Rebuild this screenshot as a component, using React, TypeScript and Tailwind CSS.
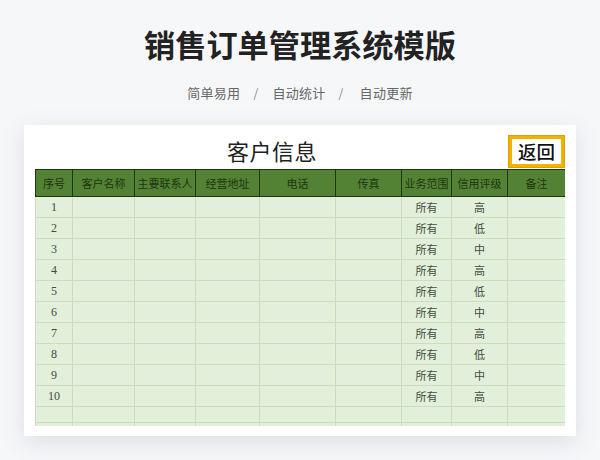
const columns = [
  { label: '序号', width: 'w-[37px]' },
  { label: '客户名称', width: 'w-[62px]' },
  { label: '主要联系人', width: 'w-[61px]' },
  { label: '经营地址', width: 'w-[64px]' },
  { label: '电话', width: 'w-[76px]' },
  { label: '传真', width: 'w-[66px]' },
  { label: '业务范围', width: 'w-[50px]' },
  { label: '信用评级', width: 'w-[56px]' },
  { label: '备注', width: 'w-[58px]' },
];

const grades = ['高', '低', '中', '高', '低', '中', '高', '低', '中', '高'];
const rows = grades.map((grade, i) => ({ no: String(i + 1), scope: '所有', grade }));

const cell = 'border border-[#cbdcc1] p-0 text-center align-middle';

function Row({ no = '', scope = '', grade = '', height = 'h-[21px]' }) {
  return (
    <tr className={height}>
      <td className={`${cell} font-["Liberation_Serif",serif] text-[12px]`}>{no}</td>
      <td className={cell} />
      <td className={cell} />
      <td className={cell} />
      <td className={cell} />
      <td className={cell} />
      <td className={cell}>{scope}</td>
      <td className={cell}>{grade}</td>
      <td className={cell} />
    </tr>
  );
}

export default function App() {
  return (
    <div className='flex h-[460px] w-[600px] flex-col items-center overflow-hidden bg-[#f6f7f9] font-["Noto_Sans_CJK_SC","Noto_Sans",sans-serif]'>
      <h1 className="mt-[23px] h-[42px] text-[31.2px] leading-[42px] font-bold text-[#222222]">销售订单管理系统模版</h1>

      <div className="mt-[19px] flex h-[18px] items-center text-[13px] leading-[18px] tracking-[0.3px] text-[#666666]">
        <span>简单易用</span>
        <span className="mx-[13px] text-[12px] text-[#888888]">/</span>
        <span className="ml-[1px]">自动统计</span>
        <span className="mx-[13px] text-[12px] text-[#888888]">/</span>
        <span className="ml-[3px]">自动更新</span>
      </div>

      <div className="mt-[23px] h-[311px] w-[552px] bg-white px-[11px] pt-[10px] shadow-[0_6px_22px_rgba(90,100,120,0.16)]">
        <div className="flex h-[34px] items-start justify-between pl-[192px]">
          <span className="text-[22px] leading-[30px] font-normal tracking-[0.5px] text-[#222222]">客户信息</span>
          <button className="flex h-[33px] w-[57px] items-center justify-center border-[4px] border-[#f2b200] bg-white text-[18.5px] leading-none font-medium text-[#111111] outline outline-1 -outline-offset-1 outline-[#d9a106]">
            返回
          </button>
        </div>

        <div className="h-[257px] overflow-hidden">
          <table className="w-[530px] table-fixed border-collapse bg-[#e2efda] text-[11px] leading-none text-[#434d3e]">
            <colgroup>
              {columns.map((c) => (
                <col key={c.label} className={c.width} />
              ))}
            </colgroup>
            <thead>
              <tr className="h-[27px] bg-[#548235] text-[11px] text-[#1c3510]">
                {columns.map((c) => (
                  <th key={c.label} className="overflow-hidden border border-[#1d3510] p-0 text-center font-normal whitespace-nowrap">
                    {c.label}
                  </th>
                ))}
              </tr>
            </thead>
            <tbody>
              {rows.map((r) => (
                <Row key={r.no} no={r.no} scope={r.scope} grade={r.grade} />
              ))}
              <Row height="h-[16px]" />
              <Row height="h-[16px]" />
            </tbody>
          </table>
        </div>
      </div>
    </div>
  );
}
